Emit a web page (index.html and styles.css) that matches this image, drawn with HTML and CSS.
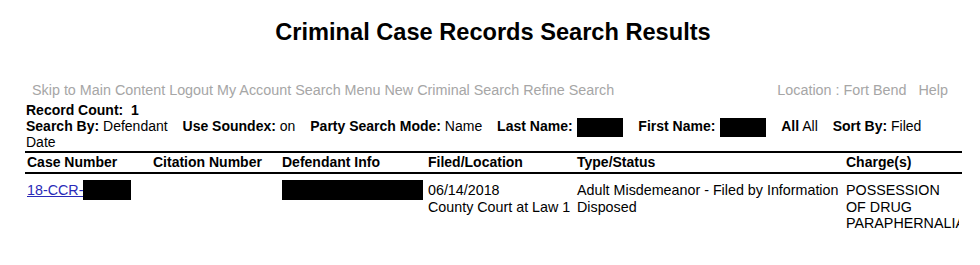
FILE: index.html
```html
<!DOCTYPE html>
<html lang="en">
<head>
    <meta charset="UTF-8">
    <title>Criminal Case Records Search Results</title>
    <link rel="stylesheet" href="styles.css">
</head>
<body>
    <h1 class="page-title">Criminal Case Records Search Results</h1>

    <div class="nav-bar">
        <div class="nav-left">
            <a href="#main">Skip to Main Content</a>
            <a href="#">Logout</a>
            <a href="#">My Account</a>
            <a href="#">Search Menu</a>
            <a href="#">New Criminal Search</a>
            <a href="#">Refine Search</a>
        </div>
        <div class="nav-right">
            <span>Location : Fort Bend</span>
            <a href="#">Help</a>
        </div>
    </div>

    <div class="search-info" id="main">
        <div><b>Record Count:</b>&nbsp;&nbsp;<b>1</b></div>
        <div>
            <span class="crit"><b>Search By:</b> Defendant</span>
            <span class="crit"><b>Use Soundex:</b> on</span>
            <span class="crit"><b>Party Search Mode:</b> Name</span>
            <span class="crit"><b>Last Name:</b> <span class="redact redact-name"></span></span>
            <span class="crit"><b>First Name:</b> <span class="redact redact-name"></span></span>
            <span class="crit"><b>All</b> All</span>
            <span class="crit"><b>Sort By:</b> Filed Date</span>
        </div>
    </div>

    <table class="results">
        <thead>
            <tr>
                <th class="col-case">Case Number</th>
                <th class="col-citation">Citation Number</th>
                <th class="col-defendant">Defendant Info</th>
                <th class="col-filed">Filed/Location</th>
                <th class="col-type">Type/Status</th>
                <th class="col-charge">Charge(s)</th>
            </tr>
        </thead>
        <tbody>
            <tr>
                <td><a href="#">18-CCR-</a><span class="redact redact-case"></span></td>
                <td></td>
                <td><span class="redact redact-defendant"></span></td>
                <td>06/14/2018<br>County Court at Law 1</td>
                <td>Adult Misdemeanor - Filed by Information<br>Disposed</td>
                <td><div class="charge">POSSESSION OF DRUG PARAPHERNALIA</div></td>
            </tr>
        </tbody>
    </table>
</body>
</html>
```

FILE: styles.css
```css
* {
    box-sizing: border-box;
}

body {
    margin: 0;
    padding: 0 19px 0 25px;
    font-family: 'Liberation Sans', Arial, sans-serif;
    font-size: 14px;
    color: #000;
    background: #fff;
}

.page-title {
    margin: 0;
    padding-top: 19px;
    height: 62px;
    text-align: center;
    font-size: 23.6px;
    font-weight: bold;
}

.nav-bar {
    display: flex;
    justify-content: space-between;
    padding: 0 13px 0 7px;
    font-size: 14.35px;
    line-height: 17px;
    margin-top: 20px;
}

.nav-bar a,
.nav-bar span {
    color: #a6a6a6;
    text-decoration: none;
}

.nav-right {
    display: flex;
    gap: 12px;
}

.search-info {
    margin-top: 3px;
    width: 920px;
    line-height: 16px;
    padding-left: 1px;
}

.crit {
    margin-right: 11px;
}

.redact {
    display: inline-block;
    background: #000;
    vertical-align: middle;
}

.redact-name {
    width: 46px;
    height: 19px;
    margin: -3px 0 -3px 1px;
}

.redact-case {
    width: 48px;
    height: 20px;
    margin: -4px 0 -2px;
}

.redact-defendant {
    width: 141px;
    height: 20px;
    margin: -4px 0 -2px;
}

.results {
    width: 937px;
    border-collapse: collapse;
    border-top: 2px solid #000;
    margin-top: 1px;
}

.results th {
    text-align: left;
    font-weight: bold;
    padding: 1px 2px 2px;
    border-bottom: 2px solid #000;
    line-height: 16px;
}

.results td {
    vertical-align: top;
    padding: 8px 2px 0;
    line-height: 16.5px;
    font-size: 14.3px;
}

.results a {
    color: #2a2ab8;
}

.col-case { width: 126px; }
.col-citation { width: 129px; }
.col-defendant { width: 146px; }
.col-filed { width: 149px; }
.col-type { width: 269px; }

.charge {
    width: 113px;
    overflow: hidden;
}
```
